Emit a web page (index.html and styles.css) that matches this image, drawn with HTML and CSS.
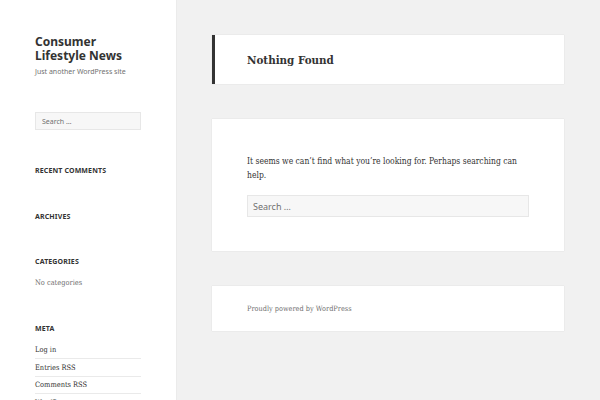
FILE: index.html
```html
<!DOCTYPE html>
<html lang="en">
<head>
<meta charset="utf-8">
<title>Nothing Found – Consumer Lifestyle News</title>
<link rel="stylesheet" href="styles.css">
</head>
<body>
<div class="page">
  <aside class="sidebar">
    <div class="branding">
      <p class="site-title">Consumer Lifestyle News</p>
      <p class="site-description">Just another WordPress site</p>
    </div>
    <div class="widget widget-search">
      <input class="search-field small" type="search" placeholder="Search …">
    </div>
    <div class="widget widget-empty">
      <h2 class="widget-title">Recent Comments</h2>
    </div>
    <div class="widget widget-empty">
      <h2 class="widget-title">Archives</h2>
    </div>
    <div class="widget">
      <h2 class="widget-title">Categories</h2>
      <ul class="widget-list">
        <li class="muted">No categories</li>
      </ul>
    </div>
    <div class="widget">
      <h2 class="widget-title">Meta</h2>
      <ul class="widget-list">
        <li>Log in</li>
        <li>Entries RSS</li>
        <li>Comments RSS</li>
        <li>WordPress.org</li>
      </ul>
    </div>
  </aside>
  <main class="content">
    <header class="card page-header">
      <h1 class="page-title">Nothing Found</h1>
    </header>
    <section class="card page-body">
      <p class="entry-text">It seems we can’t find what you’re looking for. Perhaps searching can help.</p>
      <input class="search-field large" type="search" placeholder="Search …">
    </section>
    <footer class="card site-footer">
      <p class="credit">Proudly powered by WordPress</p>
    </footer>
  </main>
</div>
</body>
</html>
```

FILE: styles.css
```css
* { box-sizing: border-box; }
html, body { margin: 0; padding: 0; }
body {
  background: #f1f1f1;
  color: #333;
  font-family: "DejaVu Serif Condensed", "DejaVu Serif", serif;
  font-stretch: condensed;
  width: 600px;
  height: 400px;
  overflow: hidden;
}
.page {
  display: flex;
  align-items: flex-start;
  min-height: 400px;
}
.sidebar {
  width: 176px;
  flex: none;
  min-height: 400px;
  background: #fff;
  box-shadow: 0 0 1px rgba(0,0,0,0.15);
  padding: 35px 35px 0 35px;
  font-family: "Noto Sans", sans-serif;
  font-stretch: normal;
}
.site-title {
  margin: 0;
  font-size: 12px;
  line-height: 14px;
  font-weight: 700;
  color: #333;
}
.site-description {
  margin: 4px 0 0;
  font-size: 7px;
  line-height: 10px;
  color: #707070;
}
.widget { margin: 0; }
.widget-search { margin-top: 35px; }
.search-field {
  display: block;
  width: 100%;
  background: #f7f7f7;
  border: 1px solid rgba(51,51,51,0.08);
  border-radius: 0;
  font-family: "Noto Sans", sans-serif;
  font-stretch: normal;
  color: #707070;
  outline: none;
  -webkit-appearance: none;
  appearance: none;
}
.search-field::placeholder { color: #707070; }
.search-field.small {
  height: 18px;
  font-size: 7px;
  padding: 0 6px;
}
.search-field.large {
  height: 22px;
  font-size: 9px;
  padding: 0 5px;
}
.widget-search + .widget { margin-top: 36px; }
.widget-title {
  margin: 0;
  font-size: 7px;
  line-height: 10px;
  font-weight: 700;
  text-transform: uppercase;
  letter-spacing: 0.02em;
  color: #333;
}
.widget-empty { margin-bottom: 35.5px; }
.widget-list {
  list-style: none;
  margin: 9px 0 33px;
  padding: 0;
  font-family: "DejaVu Serif Condensed", "DejaVu Serif", serif;
  font-stretch: condensed;
  font-size: 7.4px;
  line-height: 14px;
}
.widget-list li {
  padding: 1.5px 0 1px;
  border-top: 1px solid #eaeaea;
  color: #333;
}
.widget-list li:first-child { border-top: 0; padding-top: 0; }
.widget-list li.muted { color: #707070; }
.content {
  flex: 1;
  padding: 35px 36px 0 36px;
  display: flex;
  flex-direction: column;
  gap: 35px;
}
.card {
  background: #fff;
  box-shadow: 0 0 1px rgba(0,0,0,0.15);
}
.page-header {
  border-left: 3px solid #333;
  height: 49px;
  padding: 0 32px;
  display: flex;
  align-items: center;
}
.page-title {
  margin: 0;
  font-size: 11.5px;
  line-height: 14px;
  font-weight: 700;
  color: #333;
}
.page-body {
  padding: 35px 35px 34px;
  height: 132px;
}
.entry-text {
  margin: 0 0 13px;
  font-size: 8.5px;
  line-height: 14px;
  color: #333;
}
.site-footer {
  height: 45px;
  padding: 0 35px;
  display: flex;
  align-items: center;
}
.credit {
  margin: 0;
  font-size: 7.3px;
  line-height: 10px;
  color: #707070;
}
```
